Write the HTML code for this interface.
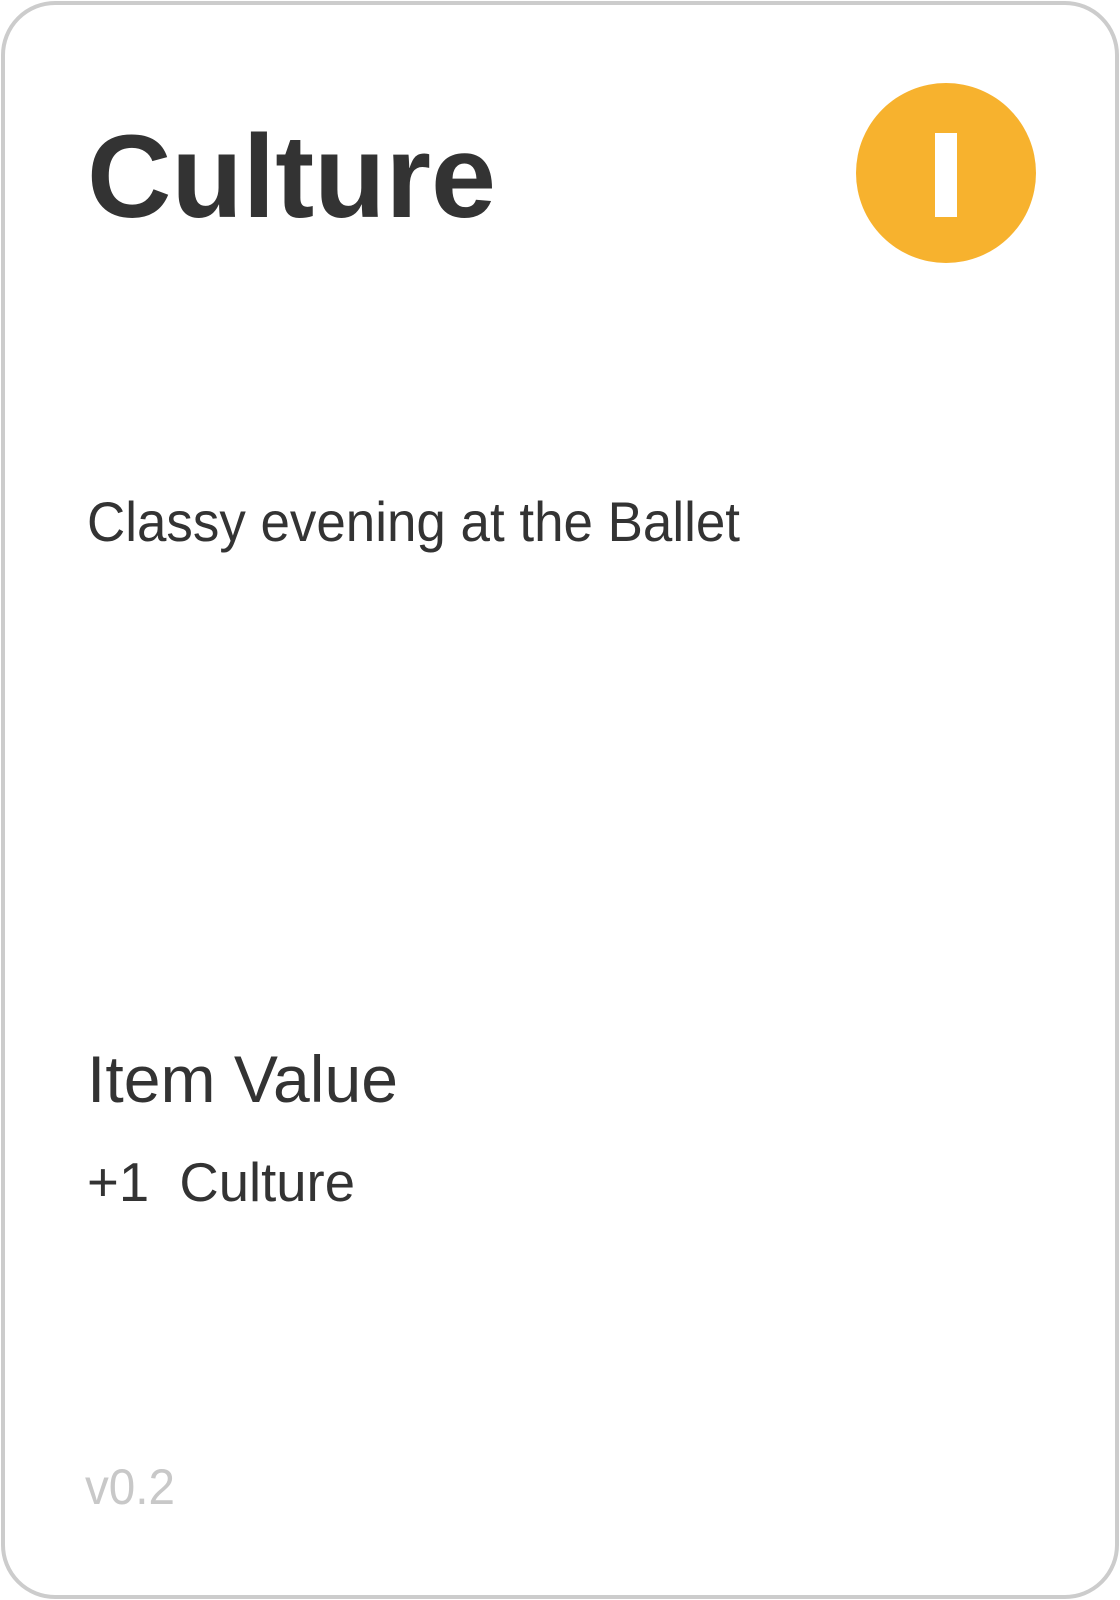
<!DOCTYPE html>
<html><head><meta charset="utf-8"><style>
html,body{margin:0;padding:0;background:#fff;width:1120px;height:1600px;overflow:hidden}
svg{display:block}
</style></head><body>
<svg width="1120" height="1600" viewBox="0 0 1120 1600" xmlns="http://www.w3.org/2000/svg" font-family="Liberation Sans, sans-serif">
<rect x="3" y="3" width="1114" height="1594" rx="52" ry="52" fill="#fff" stroke="#cccccc" stroke-width="4"/>
<text x="87" y="217" font-size="118" font-weight="bold" fill="#333" textLength="409" lengthAdjust="spacingAndGlyphs">Culture</text>
<circle cx="946" cy="173" r="90" fill="#f7b22e"/>
<rect x="935" y="133" width="22" height="84" fill="#fff"/>
<text x="87" y="541" font-size="56" fill="#333" textLength="653" lengthAdjust="spacingAndGlyphs">Classy evening at the Ballet</text>
<text x="87" y="1102" font-size="66" fill="#333" textLength="311" lengthAdjust="spacingAndGlyphs">Item Value</text>
<text x="87" y="1201" font-size="55" fill="#333" textLength="268" lengthAdjust="spacingAndGlyphs" xml:space="preserve">+1  Culture</text>
<text x="85" y="1504" font-size="50" fill="#c8c8c8" textLength="90" lengthAdjust="spacingAndGlyphs">v0.2</text>
</svg>
</body></html>
